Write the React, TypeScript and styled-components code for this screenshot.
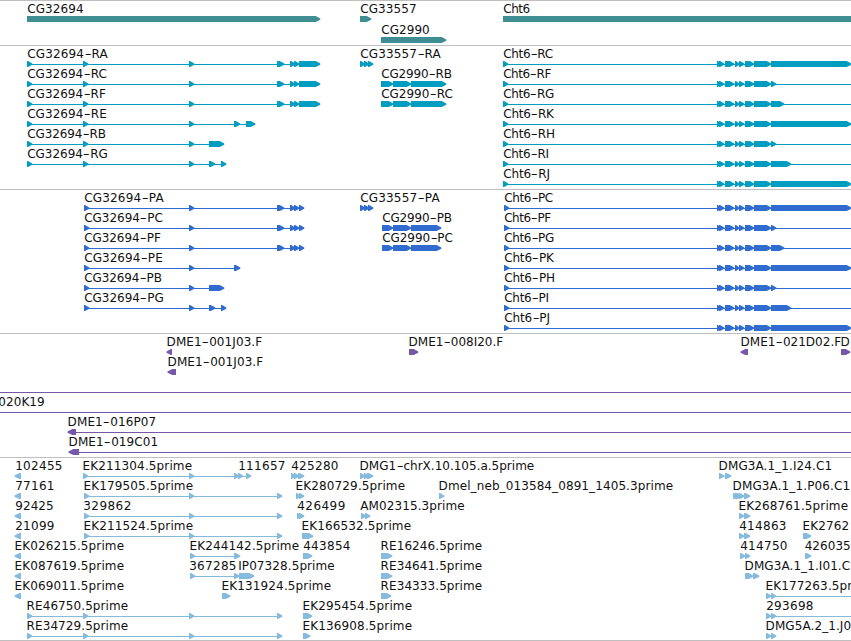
import React from "react";
import styled, { createGlobalStyle } from "styled-components";

const GlobalStyle = createGlobalStyle`
  html, body { margin: 0; padding: 0; background: #fff; overflow: hidden; }
`;

const FONT = '12px "DejaVu Sans", sans-serif';
const HYPHEN_EXTRA = 3;
const VIEW_WIDTH = 851;

const Browser = styled.main`
  display: flex;
  flex-direction: column;
  width: ${VIEW_WIDTH}px;
  height: 641px;
  overflow: hidden;
  background: #fff;
`;

const TrackPanel = styled.section<{ $height: number; $color: string }>`
  display: flex;
  flex-direction: column;
  flex: none;
  box-sizing: border-box;
  height: ${(p) => p.$height}px;
  border-top: 1px solid #bfbfbf;
  color: ${(p) => p.$color};
`;

const Lane = styled.div<{ $height: number }>`
  position: relative;
  flex: none;
  height: ${(p) => p.$height}px;
`;

const Glyphs = styled.svg`
  display: block;
  width: ${VIEW_WIDTH}px;
  height: 21px;
  overflow: hidden;
  fill: currentColor;
`;

const Label = styled.span<{ $x: number }>`
  position: absolute;
  top: 1px;
  left: ${(p) => p.$x}px;
  font: ${FONT};
  line-height: 15px;
  white-space: pre;
  color: #111;
`;

const Hyphen = styled.span`
  display: inline-block;
  margin: 0 ${HYPHEN_EXTRA / 2}px;
  transform: scaleX(1.6);
`;

type Span = [number, number];
type Name = [text: string, start: number, end: number];
interface Feature {
  spans: Span[];
  to?: number;
  back?: boolean;
}
interface Row {
  names?: Name[];
  features?: Feature[];
}

const f = (spans: Span[], to?: number): Feature => ({ spans, to });
const b = (spans: Span[], to?: number): Feature => ({ spans, to, back: true });

const context = document.createElement("canvas").getContext("2d")!;

function fitSpacing(text: string, width: number) {
  context.font = FONT;
  const hyphens = text.split("-").length - 1;
  const natural = context.measureText(text).width + hyphens * HYPHEN_EXTRA;
  return (width - natural) / text.length;
}

const bearing = (text: string) => (/^[DER]/.test(text) ? 0.6 : 0.2);

function FeatureName({ name: [text, start, end] }: { name: Name }) {
  const parts = text.split("-");
  return (
    <Label $x={start + bearing(text)} style={{ letterSpacing: fitSpacing(text, end - start + 0.6) }}>
      {parts.map((part, i) => (
        <React.Fragment key={i}>
          {i > 0 && <Hyphen>-</Hyphen>}
          {part}
        </React.Fragment>
      ))}
    </Label>
  );
}

// A six-pixel-high bar that narrows to a blunt point on its leading side.
function arrow([x1, x2]: Span, back?: boolean) {
  const head = Math.min(5.3, x2 - x1 - 1);
  return back
    ? `M${x2} 15H${x1 + head}L${x1 + 0.5} 17.4V18.8L${x1 + head} 21H${x2}Z`
    : `M${x1} 15H${x2 - head}L${x2 - 0.7} 17.4V18.8L${x2 - head} 21H${x1}Z`;
}

function FeatureShape({ feature: { spans, to, back } }: { feature: Feature }) {
  const start = spans.length ? spans[0][0] + (back ? 2 : 0) : 0;
  const end = to ?? spans[spans.length - 1][1] - 1;
  return (
    <>
      {(spans.length > 1 || to) && <rect x={start} y={18} width={end - start} height={1} />}
      {spans.map((s, i) => (
        <path key={i} d={arrow(s, back)} />
      ))}
    </>
  );
}

interface TrackProps {
  color: string;
  height: number;
  laneHeight?: number;
  rows: Row[];
}

function Track({ color, height, laneHeight = 20, rows }: TrackProps) {
  return (
    <TrackPanel $height={height} $color={color}>
      {rows.map((row, i) => (
        <Lane key={i} $height={laneHeight}>
          <Glyphs>
            {row.features?.map((feature, j) => <FeatureShape key={j} feature={feature} />)}
          </Glyphs>
          {row.names?.map((name) => <FeatureName key={name[0] + name[1]} name={name} />)}
        </Lane>
      ))}
    </TrackPanel>
  );
}

const genes: Row[] = [
  {
    names: [["CG32694", 27, 83], ["CG33557", 360, 416], ["Cht6", 503, 529]],
    features: [f([[27, 321]]), f([[360, 372]]), f([[503, 870]])],
  },
  { names: [["CG2990", 381, 429]], features: [f([[381, 447]])] },
];

const cht = (start: number, last: number): Feature =>
  f([[start, start + 6], [717, 721], [719, 725], [725, 735], [735, 740], [739, 745], [745, 755], [754, 772], [771, last]], VIEW_WIDTH);
const A: Span = [83, 89];
const B: Span = [189, 195];
const C: Span = [277, 285];

const fullTranscript = f([[27, 33], A, B, C, [290, 296], [294, 300], [299, 321]]);
const transcripts: Row[] = [
  {
    names: [["CG32694-RA", 27, 107], ["CG33557-RA", 360, 440], ["Cht6-RC", 503, 552]],
    features: [fullTranscript, f([[360, 366], [364, 370], [368, 374]]), cht(503, 852)],
  },
  {
    names: [["CG32694-RC", 27, 106], ["CG2990-RB", 381, 451], ["Cht6-RF", 503, 550]],
    features: [fullTranscript, f([[381, 394], [393, 412], [411, 447]]), cht(503, 777)],
  },
  {
    names: [["CG32694-RF", 27, 105], ["CG2990-RC", 381, 452], ["Cht6-RG", 503, 553]],
    features: [fullTranscript, f([[381, 394], [393, 412], [411, 447]]), cht(503, 785)],
  },
  {
    names: [["CG32694-RE", 27, 106], ["Cht6-RK", 503, 553]],
    features: [f([[27, 33], A, B, [234, 241], [246, 256]]), cht(503, 852)],
  },
  {
    names: [["CG32694-RB", 27, 105], ["Cht6-RH", 503, 554]],
    features: [f([[27, 33], A, B, [209, 225]]), cht(503, 777)],
  },
  {
    names: [["CG32694-RG", 27, 107], ["Cht6-RI", 503, 548]],
    features: [f([[27, 33], A, B, [209, 216], [221, 227]]), cht(503, 792)],
  },
  { names: [["Cht6-RJ", 503, 549]], features: [cht(503, 852)] },
];

const fullProtein = f([[84, 90], B, C, [290, 296], [294, 300], [299, 305]]);
const proteins: Row[] = [
  {
    names: [["CG32694-PA", 84, 163], ["CG33557-PA", 360, 439], ["Cht6-PC", 504, 552]],
    features: [fullProtein, f([[360, 366], [364, 370], [368, 374]]), cht(504, 852)],
  },
  {
    names: [["CG32694-PC", 84, 162], ["CG2990-PB", 382, 451], ["Cht6-PF", 504, 550]],
    features: [fullProtein, f([[382, 394], [393, 412], [411, 442]]), cht(504, 777)],
  },
  {
    names: [["CG32694-PF", 84, 160], ["CG2990-PC", 382, 452], ["Cht6-PG", 504, 553]],
    features: [fullProtein, f([[382, 394], [393, 412], [411, 442]]), cht(504, 785)],
  },
  {
    names: [["CG32694-PE", 84, 162], ["Cht6-PK", 504, 553]],
    features: [f([[84, 90], B, [234, 241]]), cht(504, 852)],
  },
  {
    names: [["CG32694-PB", 84, 161], ["Cht6-PH", 504, 554]],
    features: [f([[84, 90], B, [209, 225]]), cht(504, 777)],
  },
  {
    names: [["CG32694-PG", 84, 163], ["Cht6-PI", 504, 548]],
    features: [f([[84, 90], B, [209, 216], [221, 227]]), cht(504, 792)],
  },
  { names: [["Cht6-PJ", 504, 549]], features: [cht(504, 852)] },
];

const clones: Row[] = [
  {
    names: [["DME1-001J03.F", 166, 261], ["DME1-008I20.F", 408, 502], ["DME1-021D02.F", 740, 840], ["D", 840, 849]],
    features: [b([[166, 172]]), f([[409, 419]]), b([[740, 748]]), f([[841, 851]])],
  },
  { names: [["DME1-001J03.F", 167, 262]], features: [b([[167, 176]])] },
  { features: [f([], VIEW_WIDTH)] },
  { names: [["020K19", -2, 44]], features: [f([], VIEW_WIDTH)] },
  { names: [["DME1-016P07", 67, 155]], features: [b([[67, 76]], VIEW_WIDTH)] },
  { names: [["DME1-019C01", 68, 157]], features: [b([[68, 79]], VIEW_WIDTH)] },
];

const left = b([[14, 21]]);
const long = f([[84, 90], B, [277, 283]]);
const longRE = f([[27, 33], A, B, [277, 283]]);
const pair = (x: number, to?: number) => f([[x, x + 6], [x + 5, x + 11]], to);

const ests: Row[] = [
  {
    names: [["102455", 15, 62], ["EK211304.5prime", 82, 191], ["111657", 238, 285], ["425280", 291, 338], ["DMG1-chrX.10.105.a.5prime", 359, 533], ["DMG3A.1_1.I24.C1", 718, 831]],
    features: [left, f([A, B, [234, 240], [238, 244], [246, 252]]), f([[291, 297], [294, 300], [298, 305]]), f([[360, 366], [364, 370], [367, 374]]), f([[719, 725], [725, 732]])],
  },
  {
    names: [["77161", 15, 54], ["EK179505.5prime", 83, 192], ["EK280729.5prime", 295, 404], ["Dmel_neb_013584_0891_1405.3prime", 438, 672], ["DMG3A.1_1.P06.C1", 732, 849]],
    features: [left, long, f([[296, 301], [299, 305]]), f([[439, 445]]), f([[733, 739], [735, 743], [739, 745], [744, 751]])],
  },
  {
    names: [["92425", 15, 53], ["329862", 83, 131], ["426499", 297, 345], ["AM02315.3prime", 360, 464], ["EK268761.5prime", 738, 847]],
    features: [left, long, f([[297, 302], [299, 305]]), f([[361, 367], [365, 371]]), f([[739, 745], [744, 751]])],
  },
  {
    names: [["21099", 15, 54], ["EK211524.5prime", 83, 192], ["EK166532.5prime", 301, 410], ["414863", 739, 786], ["EK2762", 802, 848]],
    features: [left, long, f([[302, 314]]), f([[739, 745], [744, 751]]), f([[803, 812]])],
  },
  {
    names: [["EK026215.5prime", 14, 123], ["EK244142.5prime", 189, 298], ["443854", 303, 350], ["RE16246.5prime", 380, 481], ["414750", 740, 787], ["426035", 804.5, 850]],
    features: [left, f([[190, 196], [234, 241]]), f([[303, 313]]), f([[381, 393]]), pair(740), f([[805, 812]])],
  },
  {
    names: [["EK087619.5prime", 14, 123], ["367285", 189, 236], ["IP07328.5prime", 238, 334], ["RE34641.5prime", 380, 481], ["DMG3A.1_1.I01.C", 744, 849]],
    features: [left, f([[190, 196], [234, 240]]), f([[239, 255]]), f([[381, 393]]), f([[745, 754], [753, 760]])],
  },
  {
    names: [["EK069011.5prime", 14, 123], ["EK131924.5prime", 221, 330], ["RE34333.5prime", 380, 481], ["EK177263.5prime", 765, 874]],
    features: [left, f([[222, 231]]), f([[381, 392]]), pair(766, VIEW_WIDTH)],
  },
  {
    names: [["RE46750.5prime", 26, 127], ["EK295454.5prime", 302, 411], ["293698", 766, 813]],
    features: [longRE, f([[303, 313]]), pair(766, VIEW_WIDTH)],
  },
  {
    names: [["RE34729.5prime", 26, 127], ["EK136908.5prime", 302, 411], ["DMG5A.2_1.J0", 765, 850]],
    features: [longRE, f([[303, 311]]), pair(766)],
  },
];

export default function App() {
  return (
    <Browser>
      <GlobalStyle />
      <Track color="#3f8e94" height={45} laneHeight={21} rows={genes} />
      <Track color="#009dc0" height={144} rows={transcripts} />
      <Track color="#306ccf" height={144} rows={proteins} />
      <Track color="#7558a8" height={124} rows={clones} />
      <Track color="#87bbdd" height={183} rows={ests} />
      <TrackPanel $height={1} $color="#bfbfbf" />
    </Browser>
  );
}
